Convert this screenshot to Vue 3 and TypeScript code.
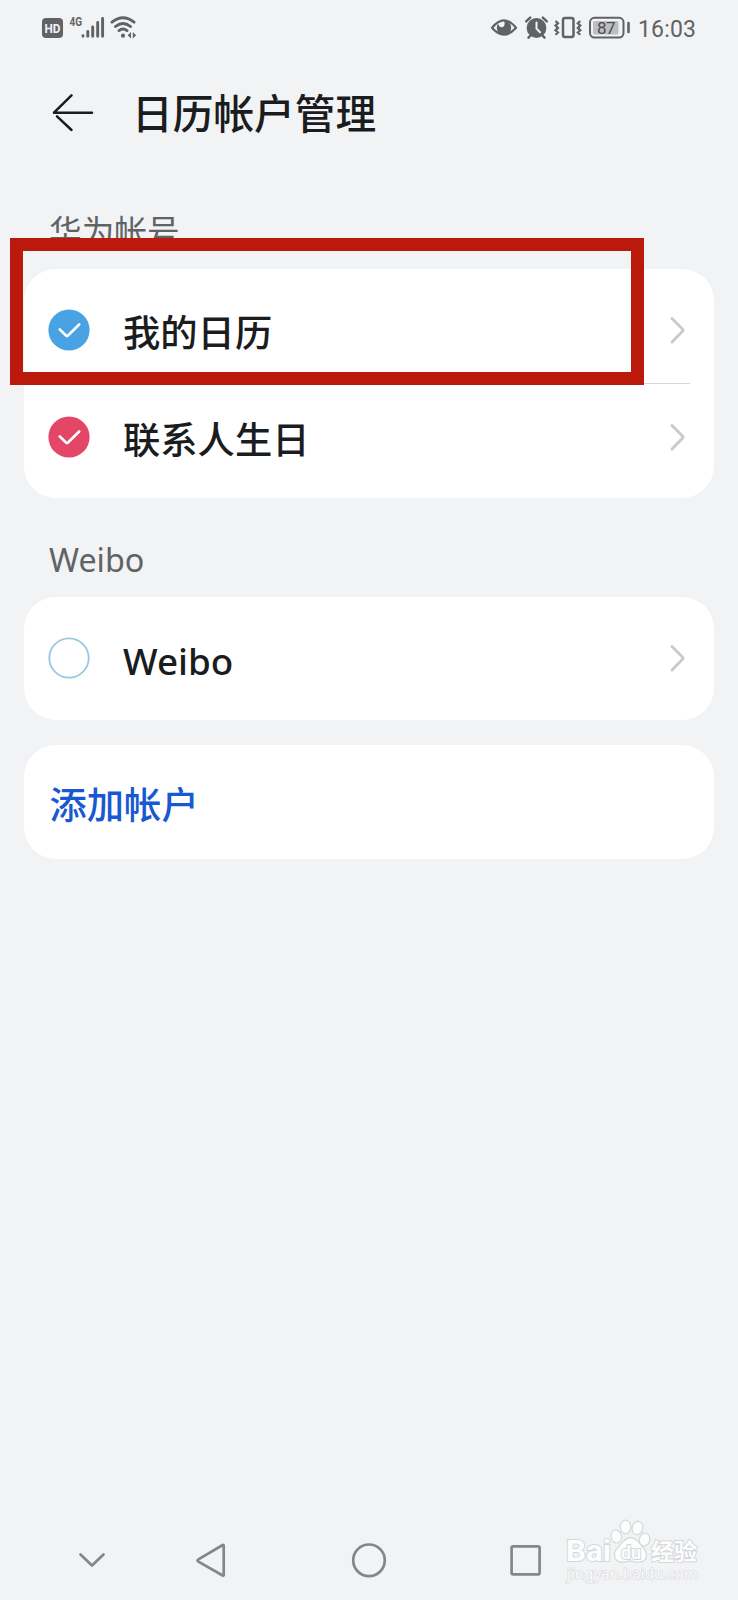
<script setup lang="ts">
interface CalendarItem {
  name: string
  tone: 'blue' | 'red' | 'empty'
}

interface AccountGroup {
  title: string
  latin: boolean
  items: CalendarItem[]
}

const groups: AccountGroup[] = [
  {
    title: '华为帐号',
    latin: false,
    items: [
      { name: '我的日历', tone: 'blue' },
      { name: '联系人生日', tone: 'red' },
    ],
  },
  { title: 'Weibo', latin: true, items: [{ name: 'Weibo', tone: 'empty' }] },
]
</script>

<template>
  <div class="screen">
    <header class="status">
      <svg class="status-left" width="100" height="30" viewBox="40 12 100 30">
        <rect x="42" y="18" width="21" height="20" rx="4" fill="#616264" />
        <text x="52.5" y="32.8" text-anchor="middle" class="hd" textLength="16" lengthAdjust="spacingAndGlyphs">HD</text>
        <text x="69.5" y="26.3" class="net" textLength="12.5" lengthAdjust="spacingAndGlyphs">4G</text>
        <g stroke="#616264" stroke-width="2.9" stroke-linecap="round">
          <path d="M83 35.6v.6M87.8 31.4v4.8M92.7 27v9.2M97.7 22.4v13.8M102.6 18.4v17.8" />
        </g>
        <g fill="none" stroke="#616264" stroke-width="2.9" stroke-linecap="round">
          <path d="M112 22.2Q123 13.2 134 22.2M115.5 26.5Q123 20.3 130.5 26.5M119 30.7Q123 27.5 127 30.7" />
        </g>
        <circle cx="123" cy="35.7" r="2.1" fill="#616264" />
        <path d="M131 32v6.500l-3.300-3.200zM132.800 32v6.500l3.300-3.200z" fill="#616264" />
      </svg>
      <svg class="status-right" width="212" height="30" viewBox="488 12 212 30">
        <g fill="none" stroke="#616264" stroke-width="2.2" stroke-linejoin="round">
          <path d="M492 27.8Q504 12.8 516 27.8Q504 41.5 492 27.8Z" />
        </g>
        <path d="M504 20.5a7.2 7.2 0 1 1-7.2 7.2q0-2.4 1.2-4q1.5 4 4.5 3.5q3.300-.8 1.500-6.700Z" fill="#616264" />
        <circle cx="536.500" cy="28" r="9.900" fill="#616264" />
        <path d="M526.200 21.300l4-3.700M546.800 21.300l-4-3.700M530.500 35.500l-2 2.200M542.500 35.500l2 2.200" stroke="#616264" stroke-width="2.500" stroke-linecap="round" />
        <path d="M536.500 22.500v6.200l3.500 3.600" fill="none" stroke="#f2f3f5" stroke-width="2" stroke-linecap="round" />
        <rect x="563" y="18" width="10.500" height="19" rx="2" fill="none" stroke="#616264" stroke-width="2.500" />
        <path d="M555.500 21l2.500 2.300l-2.500 2.300l2.500 2.300l-2.500 2.300l2.500 2.300l-2.500 2.300M580.300 21l-2.500 2.300l2.500 2.300l-2.500 2.300l2.500 2.300l-2.500 2.300l2.500 2.300" fill="none" stroke="#616264" stroke-width="2.200" />
        <rect x="590" y="17.800" width="33.500" height="19.700" rx="4.500" fill="none" stroke="#616264" stroke-width="2" />
        <rect x="593" y="21" width="25.500" height="13.500" rx="1.500" fill="#bdbec0" />
        <path d="M628.500 23v9" stroke="#616264" stroke-width="2.600" stroke-linecap="round" />
        <text x="597" y="34" class="battery" textLength="18.500">87</text>
        <text x="638" y="36.600" class="clock" textLength="58">16:03</text>
      </svg>
    </header>

    <div class="title-bar">
      <svg class="back" width="44" height="40" viewBox="52 93 44 40">
        <path d="M92 112.700H54L71.500 95.300M57 116.300L71.500 130" fill="none" stroke="#1b1c1e" stroke-width="2.500" stroke-linecap="round" stroke-linejoin="round" />
      </svg>
      <h1>日历帐户管理</h1>
    </div>

    <main>
      <section v-for="(group, index) in groups" :key="group.title" class="group">
        <h2 :class="{ latin: group.latin }">{{ group.title }}</h2>
        <ul class="card">
          <li v-for="item in group.items" :key="item.name">
            <svg class="mark" :class="item.tone" width="42" height="42" viewBox="0 0 42 42">
              <circle cx="21" cy="21" :r="item.tone === 'empty' ? 19.7 : 20.6" />
              <path v-if="item.tone !== 'empty'" d="M11.800 20.500L18 26.500Q19 27.400 20 26.500L31.200 15.500" />
            </svg>
            <span class="name" :class="{ latin: group.latin }">{{ item.name }}</span>
            <svg class="chevron" width="18" height="30" viewBox="0 0 18 30">
              <path d="M3 3.500L13.500 14Q14.500 15 13.500 16.300L3 27" />
            </svg>
          </li>
        </ul>
        <div v-if="index === 0" class="highlight"></div>
      </section>
      <div class="card add">添加帐户</div>
    </main>

    <nav>
      <svg width="738" height="60" viewBox="0 1530 738 60" fill="none" stroke="#858688" stroke-width="2.700" stroke-linecap="round" stroke-linejoin="round">
        <path d="M80.500 1554.500L92 1565.500L103.500 1554.500" />
        <path d="M223.700 1545.500V1575Q223.700 1576 222.700 1575.500L198 1561.300Q197 1560.500 198 1559.700L222.700 1545Q223.700 1544.500 223.700 1545.500Z" />
        <circle cx="369" cy="1560.300" r="15.800" />
        <rect x="511.600" y="1546.300" width="28" height="28" rx="1.500" />
      </svg>
    </nav>

    <svg class="watermark" width="145" height="70" viewBox="560 1516 145 70">
      <g fill="#fcfdfd" stroke="#d9dadd" stroke-width="1.300">
        <ellipse cx="616.300" cy="1536.500" rx="5.200" ry="6.500" transform="rotate(-15 616.300 1536.500)" />
        <ellipse cx="625.500" cy="1527" rx="5.300" ry="6.800" />
        <ellipse cx="637.500" cy="1528" rx="5.300" ry="6.800" transform="rotate(12 637.500 1528)" />
        <ellipse cx="644.500" cy="1539.500" rx="5.200" ry="6.500" transform="rotate(12 644.500 1539.500)" />
        <path d="M630.500 1537.500C624 1537.500 622 1544 617.500 1548C613 1552 613 1561.500 621.500 1562C626 1562.300 627 1561 630.500 1561C634 1561 636 1562.500 640 1562C648 1561 648 1552 643 1547.500C639 1543.500 637 1537.500 630.500 1537.500Z" />
      </g>
      <g class="wm-text">
        <text x="566" y="1561" class="wm-brand" textLength="45" lengthAdjust="spacingAndGlyphs">Bai</text>
        <text x="621" y="1558.500" class="wm-du" textLength="20" lengthAdjust="spacingAndGlyphs">du</text>
        <text x="651" y="1559.500" class="wm-cn" textLength="46">经验</text>
        <text x="567" y="1578.500" class="wm-url" textLength="131" lengthAdjust="spacingAndGlyphs">jingyan.baidu.com</text>
      </g>
    </svg>
  </div>
</template>

<style>
body {
  background: #f2f3f5;
}
</style>

<style scoped>
.screen {
  position: relative;
  display: flex;
  flex-direction: column;
  width: 738px;
  height: 1600px;
  overflow: hidden;
  box-sizing: border-box;
  background: #f2f3f5;
  color: #1b1c1e;
  font-family: "Noto Sans CJK SC", "Noto Sans", sans-serif;
}

svg {
  display: block;
  flex: none;
}

.status {
  display: flex;
  justify-content: space-between;
  padding: 12px 38px 0 40px;
}

.hd {
  font: 700 13.500px Roboto, sans-serif;
  fill: #f2f3f5;
}

.net {
  font: 700 13.500px Roboto, sans-serif;
  fill: #616264;
}

.battery {
  font: 400 17px Roboto, sans-serif;
  fill: #4d4e50;
}

.clock {
  font: 400 23px Roboto, sans-serif;
  fill: #616264;
}

.title-bar {
  display: flex;
  align-items: center;
  gap: 36px;
  height: 62px;
  margin-top: 40px;
  padding-left: 52px;
}

h1 {
  margin: -3px 0 0;
  font-size: 40.700px;
  font-weight: 500;
  line-height: 60px;
}

main {
  display: flex;
  flex-direction: column;
  padding: 0 24px;
}

.group {
  position: relative;
}

h2 {
  box-sizing: border-box;
  height: 125px;
  margin: 0;
  padding: 64px 0 0 25px;
  color: #616264;
  font-size: 32.700px;
  font-weight: 400;
  line-height: 44px;
}

h2.latin {
  height: 99px;
  padding-top: 39px;
  font-family: "Noto Sans", sans-serif;
  font-size: 32.300px;
}

.card {
  margin: 0;
  padding: 0;
  border-radius: 32px;
  background: #fff;
  list-style: none;
}

li {
  display: flex;
  align-items: center;
  box-sizing: border-box;
  height: 122.500px;
  padding: 0 27.500px 0 24px;
}

li:not(:only-child) {
  height: 114px;
  padding-top: 7.500px;
}

li:not(:only-child):last-child {
  height: 115px;
  padding: 0 27.500px 8px 24px;
}

li + li {
  background: linear-gradient(#d8d8da, #d8d8da) 99px 0 / calc(100% - 123px) 1px no-repeat;
}

.mark circle {
  fill: #48a2e3;
}

.mark.red circle {
  fill: #e44668;
}

.mark.empty circle {
  fill: none;
  stroke: #96c8df;
  stroke-width: 1.800;
}

.mark path {
  fill: none;
  stroke: #fff;
  stroke-width: 2.600;
  stroke-linecap: round;
}

.name {
  flex: 1;
  margin: 3px 0 0 33px;
  font-size: 37.300px;
  font-weight: 500;
  line-height: 56px;
}

.name.latin {
  margin-top: 5px;
  font-family: "Noto Sans", sans-serif;
  font-size: 36.800px;
}

.chevron path {
  fill: none;
  stroke: #c9cacb;
  stroke-width: 2.900;
  stroke-linecap: round;
}

.highlight {
  position: absolute;
  top: 93.500px;
  left: -14.500px;
  box-sizing: border-box;
  width: 634px;
  height: 147.500px;
  border: 13.500px solid #bb190b;
}

.add {
  box-sizing: border-box;
  height: 114.500px;
  margin-top: 25px;
  padding-left: 25.500px;
  color: #1858d2;
  font-size: 37.300px;
  font-weight: 500;
  line-height: 116px;
}

nav {
  margin-top: auto;
  padding-bottom: 10px;
}

.watermark {
  position: absolute;
  right: 33px;
  bottom: 14px;
}

.wm-text text {
  fill: #fcfdfd;
  stroke: #d5d6d9;
  stroke-width: 1.900px;
  paint-order: stroke;
}

.wm-brand {
  font: 700 30px Roboto, sans-serif;
}

.wm-text .wm-du {
  font: 700 19px Roboto, sans-serif;
}

.wm-cn {
  font: 700 23px "Noto Sans CJK SC", sans-serif;
}

.wm-text .wm-url {
  font: 400 15px "Noto Sans", sans-serif;
  stroke-width: 1.200px;
}
</style>
